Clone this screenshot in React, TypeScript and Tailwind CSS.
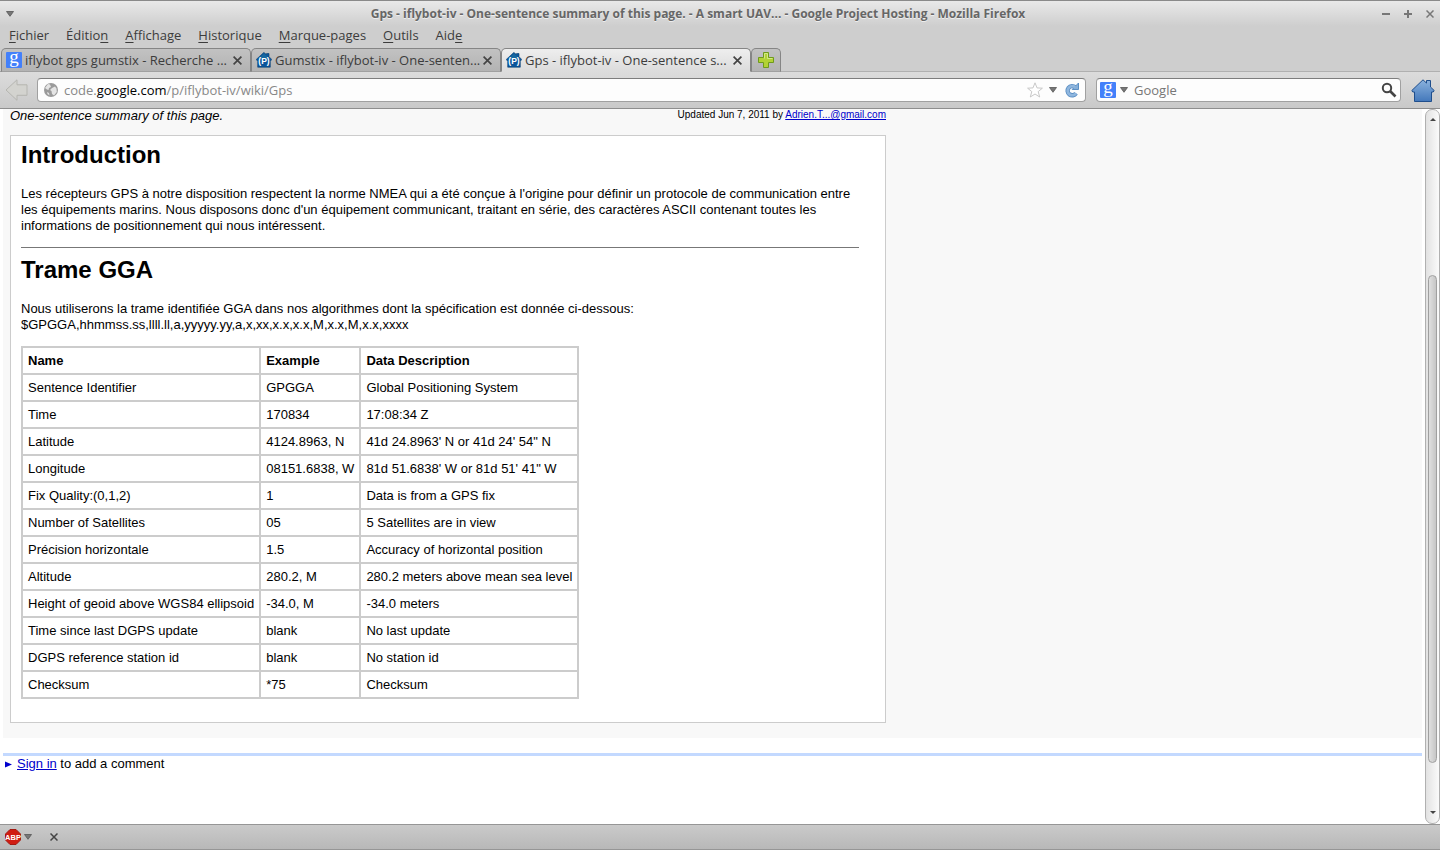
import React from 'react';

const menus: [string, string, string][] = [
  ['', 'F', 'ichier'],
  ['Éditio', 'n', ''],
  ['', 'A', 'ffichage'],
  ['', 'H', 'istorique'],
  ['', 'M', 'arque-pages'],
  ['', 'O', 'utils'],
  ['Aid', 'e', ''],
];

const rows = [
  ['Sentence Identifier', 'GPGGA', 'Global Positioning System'],
  ['Time', '170834', '17:08:34 Z'],
  ['Latitude', '4124.8963, N', '41d 24.8963\' N or 41d 24\' 54" N'],
  ['Longitude', '08151.6838, W', '81d 51.6838\' W or 81d 51\' 41" W'],
  ['Fix Quality:(0,1,2)', '1', 'Data is from a GPS fix'],
  ['Number of Satellites', '05', '5 Satellites are in view'],
  ['Précision horizontale', '1.5', 'Accuracy of horizontal position'],
  ['Altitude', '280.2, M', '280.2 meters above mean sea level'],
  ['Height of geoid above WGS84 ellipsoid', '-34.0, M', '-34.0 meters'],
  ['Time since last DGPS update', 'blank', 'No last update'],
  ['DGPS reference station id', 'blank', 'No station id'],
  ['Checksum', '*75', 'Checksum'],
];

function GoogleIcon() {
  return (
    <svg className="size-4 shrink-0" viewBox="0 0 16 16" aria-hidden="true">
      <rect width="16" height="16" rx="1" fill="#4380fa" />
      <text x="8" y="10.500" textAnchor="middle" fontSize="19" fontFamily="Liberation Serif, serif" fill="#fff">g</text>
    </svg>
  );
}

function ProjectIcon() {
  return (
    <svg className="size-4 shrink-0" viewBox="0 0 16 16" aria-hidden="true">
      <path d="M7.800.4 10.500 2.500V1.500H13v3.200L15.800 7.500 14.300 9.200v6H1.700v-6L.2 7.500Z" fill="#0a559c" stroke="#083f70" strokeWidth=".6" />
      <path d="M8 1.500 14 7H2Z" fill="#16679f" />
      <text x="8" y="12" textAnchor="middle" fontSize="8.500" fontWeight="700" fontFamily="Liberation Sans, sans-serif" fill="#fff">(P)</text>
    </svg>
  );
}

function Cross({ className }: { className: string }) {
  return (
    <svg className={className} viewBox="0 0 8 8" aria-hidden="true">
      <path d="M.5.5 7.500 7.500M7.500.5.5 7.500" stroke="currentColor" strokeWidth="1.500" />
    </svg>
  );
}

function Caret() {
  return (
    <svg className="h-[6px] w-2 shrink-0" viewBox="0 0 8 6" aria-hidden="true">
      <path d="M.5.5h7L4 5.3Z" fill="#777" stroke="#555" strokeWidth=".8" />
    </svg>
  );
}

function Tab({ title, icon, active = false }: { title: string; icon: React.ReactNode; active?: boolean }) {
  return (
    <div
      className={
        'flex w-[250px] items-center rounded-t-[5px] border border-[#858585] pr-2 pl-1 ' +
        (active
          ? 'border-b-[#dcdcdc] bg-linear-to-b from-[#eeeeee] to-[#dcdcdc]'
          : 'border-b-[#a0a0a0] bg-linear-to-b from-[#c2c2c2] to-[#b3b3b3]')
      }
    >
      <button role="tab" aria-selected={active} className="flex flex-1 items-center gap-[3px] text-left">
        {icon}
        <span className="leading-5 whitespace-nowrap">{title}</span>
      </button>
      <button aria-label="Fermer l'onglet" className="shrink-0 text-[#444]">
        <Cross className="size-[9px]" />
      </button>
    </div>
  );
}

function TitleBar() {
  return (
    <div className="flex h-[26px] shrink-0 items-center border-t border-[#8a8a8a] bg-linear-to-b from-[#e9e9e9] to-[#cecece] px-[6px]">
      <button aria-label="Menu de la fenêtre"><Caret /></button>
      <h1 className="flex-1 truncate text-center text-[12px] font-bold text-[#666] [text-shadow:0_1px_0_#eee]">
        Gps - iflybot-iv - One-sentence summary of this page. - A smart UAV... - Google Project Hosting - Mozilla Firefox
      </h1>
      <div className="flex items-center gap-[14px] text-[#777]">
        <button aria-label="Réduire">
          <svg className="size-2" viewBox="0 0 8 8"><path d="M0 4h8" stroke="currentColor" strokeWidth="2" /></svg>
        </button>
        <button aria-label="Agrandir">
          <svg className="size-2" viewBox="0 0 8 8"><path d="M0 4h8M4 0v8" stroke="currentColor" strokeWidth="2" /></svg>
        </button>
        <button aria-label="Fermer"><Cross className="size-2" /></button>
      </div>
    </div>
  );
}

function NavBar() {
  return (
    <div className="flex h-[37px] shrink-0 items-center border-b border-[#8e8e8e] bg-linear-to-b from-[#dcdcdc] to-[#c9c9c9] px-[5px]">
      <button aria-label="Page précédente" className="mr-[9px]">
        <svg className="h-[22px] w-[23px]" viewBox="0 0 23 22">
          <path d="M12 .8v5h10v10.500H12v5L1 11Z" fill="#d3d3cf" stroke="#b5b5b0" />
        </svg>
      </button>
      <div className="flex h-6 min-w-0 flex-1 items-center rounded-[4px] border border-[#a0a0a0] border-t-[#7d7d7d] bg-[#fdfdfd] pr-[5px] pl-[6px]">
        <svg className="size-[14px] shrink-0" viewBox="0 0 14 14" aria-hidden="true">
          <circle cx="7" cy="7" r="7" fill="#9a9a9a" />
          <path d="M1 5 4 1l2 .5L7 4 5 5 4.500 7 3 6.500ZM8 5l3-1.500 1.500 2L12.800 9 10 12.500 8 11l-.5-3-1.500-1ZM3 9l2 1 .5 2.500L3.500 11Z" fill="#e4e4e4" />
        </svg>
        <button className="ml-[6px] flex-1 cursor-text truncate text-left leading-5 text-[#888]" aria-label="Adresse">
          code.<span className="text-black">google.com</span>/p/iflybot-iv/wiki/Gps
        </button>
        <button aria-label="Marquer cette page" className="mr-[6px]">
          <svg className="size-4" viewBox="0 0 16 16">
            <path d="m8 .8 2 5.100 5.400.3-4.200 3.400 1.500 5.400L8 12l-4.700 3 1.500-5.400L.6 6.200 6 5.900Z" fill="#fff" stroke="#c8c8c8" />
          </svg>
        </button>
        <button aria-label="Historique" className="mr-[7px]"><Caret /></button>
        <button aria-label="Actualiser">
          <svg className="size-4" viewBox="0 0 16 16">
            <path d="M11.200 5.200A4.600 4.600 0 1 0 12 11.300" fill="none" stroke="#5b8fc4" strokeWidth="4.400" />
            <path d="M8.200 7.500h6.300V1Z" fill="#86afd9" stroke="#5b8fc4" />
            <path d="M11.200 5.200A4.600 4.600 0 1 0 12 11.300" fill="none" stroke="#8fb6de" strokeWidth="2.600" />
          </svg>
        </button>
      </div>
      <div className="ml-[10px] flex h-6 w-[305px] items-center rounded-[4px] border border-[#a0a0a0] border-t-[#7d7d7d] bg-[#fdfdfd] px-[3px]">
        <button aria-label="Moteur de recherche" className="flex items-center gap-1">
          <GoogleIcon />
          <Caret />
        </button>
        <input
          aria-label="Rechercher"
          placeholder="Google"
          className="ml-[6px] min-w-0 flex-1 bg-transparent leading-5 outline-none placeholder:text-[#777]"
        />
        <button aria-label="Lancer la recherche">
          <svg className="size-4" viewBox="0 0 16 16">
            <circle cx="6" cy="6" r="4.200" fill="none" stroke="#444" strokeWidth="2" />
            <path d="m9 9 5.500 5.500" stroke="#444" strokeWidth="2.600" />
          </svg>
        </button>
      </div>
      <button aria-label="Accueil" className="ml-[10px]">
        <svg className="h-[23px] w-6" viewBox="0 0 24 23">
          <defs>
            <linearGradient id="home" x1="0" y1="0" x2="0" y2="1">
              <stop offset="0" stopColor="#8bb2dd" />
              <stop offset="1" stopColor="#4378bb" />
            </linearGradient>
          </defs>
          <path d="M.8 11.500 12 .8l3.500 3.300V1.500h4V8l3.700 3.500-1 1.500h-1.700v9.500h-17V13H1.800Z" fill="url(#home)" stroke="#1f4e8c" />
        </svg>
      </button>
    </div>
  );
}

function Scrollbar() {
  return (
    <div className="flex w-[15px] shrink-0 flex-col items-center justify-between rounded-[7px] border border-[#b0b0b0] bg-linear-to-r from-[#e2e2e2] to-[#fafafa]">
      <svg className="mt-2 h-[3px] w-[6px] shrink-0" viewBox="0 0 6 3"><path d="M0 3h6L3 0Z" fill="#444" /></svg>
      <div className="flex w-full flex-1 flex-col items-center">
        <div className="flex-[154]" />
        <div className="w-[9px] flex-[487] rounded-[5px] border border-[#a0a0a0] bg-linear-to-r from-[#e0e0e0] to-[#c6c6c6]" />
        <div className="flex-[48]" />
      </div>
      <svg className="mb-[9px] h-[3px] w-[6px] shrink-0" viewBox="0 0 6 3"><path d="M0 0h6L3 3Z" fill="#444" /></svg>
    </div>
  );
}

function WikiPage() {
  return (
    <main className="min-w-0 flex-1 overflow-hidden px-[3px] font-['Liberation_Sans',Arial,sans-serif] text-[13px] leading-4 text-black">
      <div className="bg-[#f8f8f8] pb-[15px] pl-[7px]">
        <div className="w-[876px] max-w-full">
          <div className="flex h-[26px] items-start justify-between">
            <p className="leading-[14px] italic">One-sentence summary of this page.</p>
            <p className="text-[10px] leading-3">
              Updated Jun 7, 2011 by <a href="#author" className="text-[#0000cc] underline">Adrien.T...@gmail.com</a>
            </p>
          </div>
          <article className="border border-[#ccc] bg-white pt-1 pr-[26px] pb-[23px] pl-[10px]">
            <h2 className="text-[24px] leading-[30px] font-bold">Introduction</h2>
            <p className="mt-4">
              Les récepteurs GPS à notre disposition respectent la norme NMEA qui a été conçue à l'origine pour définir un protocole de communication entre les équipements marins. Nous disposons donc d'un équipement communicant, traitant en série, des caractères ASCII contenant toutes les informations de positionnement qui nous intéressent.
            </p>
            <hr className="mt-[13px] border-t border-[#777]" />
            <h2 className="mt-[7px] text-[24px] leading-[30px] font-bold">Trame GGA</h2>
            <p className="mt-4">
              Nous utiliserons la trame identifiée GGA dans nos algorithmes dont la spécification est donnée ci-dessous:
              <br />
              $GPGGA,hhmmss.ss,llll.ll,a,yyyyy.yy,a,x,xx,x.x,x.x,M,x.x,M,x.x,xxxx
            </p>
            <table className="mt-[13px] border-collapse">
              <thead>
                <tr>
                  {['Name', 'Example', 'Data Description'].map((h) => (
                    <th key={h} scope="col" className="border-2 border-[#ccc] px-[5px] pt-[5px] pb-1 text-left font-bold">{h}</th>
                  ))}
                </tr>
              </thead>
              <tbody>
                {rows.map((r) => (
                  <tr key={r[0]}>
                    {r.map((c, i) => (
                      <td key={i} className="border-2 border-[#ccc] px-[5px] pt-[5px] pb-1 whitespace-nowrap">{c}</td>
                    ))}
                  </tr>
                ))}
              </tbody>
            </table>
          </article>
        </div>
      </div>
      <div className="mt-[15px] flex items-center border-t-[3px] border-[#c3d9ff]">
        <svg className="mx-[2px] size-[7px]" viewBox="0 0 7 7" aria-hidden="true"><path d="M0 .5v6l7-3Z" fill="#0000cc" /></svg>
        <p className="ml-[3px]">
          <a href="#signin" className="text-[#0000cc] underline">Sign in</a> to add a comment
        </p>
      </div>
    </main>
  );
}

export default function App() {
  return (
    <div className="flex h-screen flex-col overflow-hidden bg-white font-['Open_Sans','Noto_Sans',sans-serif] text-[13px] text-[#3c3c3c]">
      <TitleBar />
      <nav className="flex h-[22px] shrink-0 items-start gap-[17px] bg-[#cecece] pl-[9px]">
        {menus.map(([before, key, after]) => (
          <button key={before + key + after} className="leading-[18px]">
            {before}<span className="underline underline-offset-2">{key}</span>{after}
          </button>
        ))}
      </nav>
      <div className="flex h-6 shrink-0 bg-[#cecece]">
        <div className="w-px border-b border-[#a0a0a0]" />
        <div role="tablist" className="flex">
          <Tab title="iflybot gps gumstix - Recherche ..." icon={<GoogleIcon />} />
          <Tab title="Gumstix - iflybot-iv - One-senten..." icon={<ProjectIcon />} />
          <Tab title="Gps - iflybot-iv - One-sentence s..." icon={<ProjectIcon />} active />
        </div>
        <button aria-label="Nouvel onglet" className="flex w-[30px] items-center justify-center rounded-t-[5px] border border-[#858585] border-b-[#a0a0a0] bg-linear-to-b from-[#c2c2c2] to-[#b3b3b3]">
          <svg className="size-4" viewBox="0 0 16 16">
            <path d="M5.500.5h5v5h5v5h-5v5h-5v-5h-5v-5h5Z" fill="#b2d235" stroke="#6f9a1c" />
            <path d="M6.500 6.500v-5h3v5h5" fill="none" stroke="#d3e886" />
          </svg>
        </button>
        <div className="flex-1 border-b border-[#b0b0b0]" />
      </div>
      <NavBar />
      <div className="flex min-h-0 flex-1">
        <WikiPage />
        <Scrollbar />
      </div>
      <footer className="flex h-[26px] shrink-0 items-center border-y border-[#969696] bg-linear-to-b from-[#cacaca] to-[#b8b8b8] pl-[5px]">
        <button aria-label="Adblock Plus" className="flex items-center gap-[3px]">
          <svg className="size-4" viewBox="0 0 16 16">
            <path d="M5 .5h6L15.500 5v6L11 15.500H5L.5 11V5Z" fill="#d01c12" stroke="#a31a12" />
            <text x="8" y="10.800" textAnchor="middle" fontSize="7.500" fontWeight="700" fontFamily="Liberation Sans Narrow, Liberation Sans, sans-serif" fill="#fff">ABP</text>
          </svg>
          <Caret />
        </button>
        <button aria-label="Fermer la barre" className="ml-[18px] text-[#444]"><Cross className="size-2" /></button>
      </footer>
    </div>
  );
}
